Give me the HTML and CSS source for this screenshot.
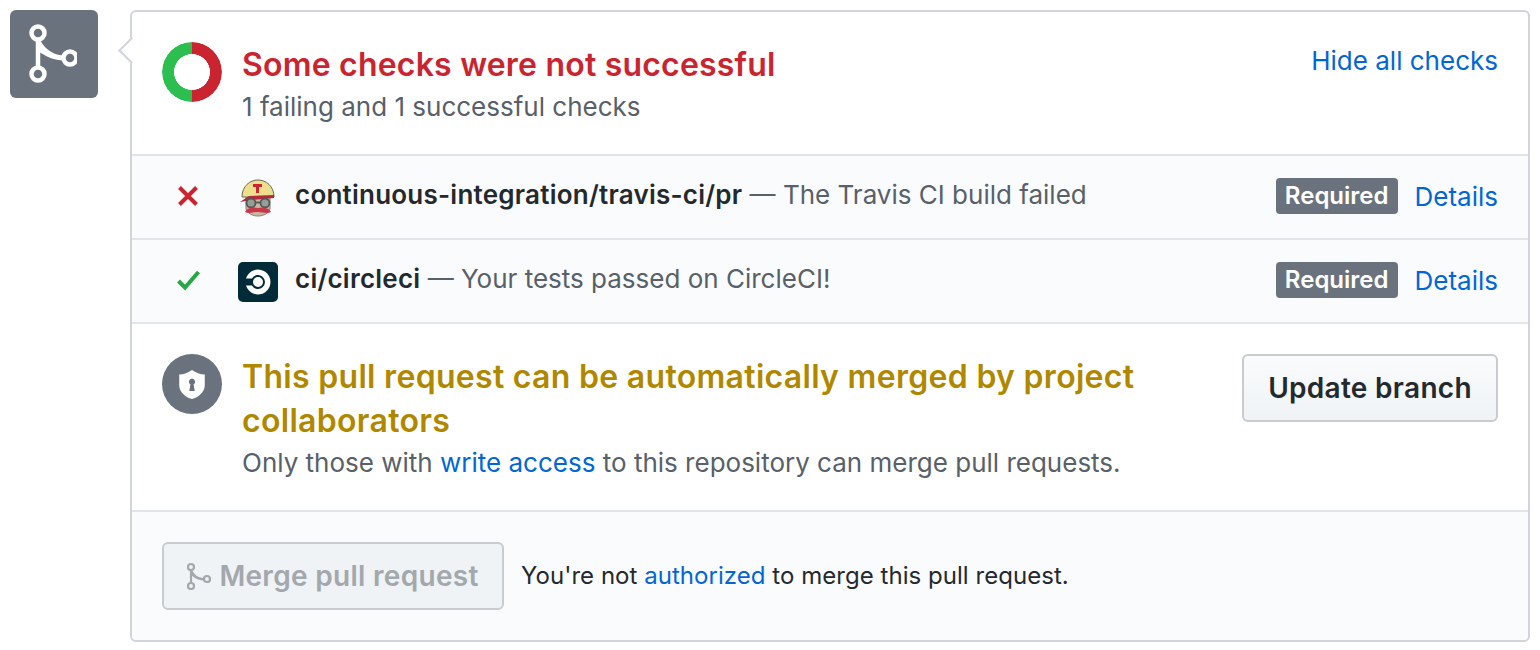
FILE: index.html
```html
<!DOCTYPE html>
<html lang="en">
<head>
<meta charset="utf-8">
<title>Merge status</title>
<link rel="stylesheet" href="styles.css">
</head>
<body>
<main class="page">
  <div class="avatar">
    <svg class="avatar-icon" viewBox="0 0 48 64" width="48" height="64"><g fill="none" stroke="#fff" stroke-width="4.5"><circle cx="9" cy="9" r="6.500"/><circle cx="9" cy="50" r="6.500"/><circle cx="41" cy="34" r="6.500"/><path d="M9 15v29"/></g><path d="M10 14C14 22 21 31 35 31.500V36.500C25 36.500 18 33 9 27Z" fill="#fff"/></svg>
  </div>
  <section class="card">
    <span class="caret"></span>
    <header class="section head">
      <div class="donut"></div>
      <div class="head-text">
        <h2 class="title fail">Some checks were not successful</h2>
        <p class="sub">1 failing and 1 successful checks</p>
      </div>
      <a class="link hide">Hide all checks</a>
    </header>
    <div class="row">
      <svg class="status" viewBox="0 0 24 24" width="24" height="24"><path d="M3.500 3.500l17 17M20.500 3.500l-17 17" stroke="#cb2431" stroke-width="4" fill="none"/></svg>
      <span class="logo">
        <svg viewBox="0 0 40 40" width="40" height="40">
          <path d="M8 19h24v12c-2 5-7 7-12 7s-10-2-12-7z" fill="#c9b6a2" stroke="#8a7f74" stroke-width="1"/>
          <path d="M4 19C4 8 12 2 20 2S36 8 36 19z" fill="#eedf8c" stroke="#6b6a55" stroke-width="1"/>
          <path d="M15 6h9v3h-3v6h-3V9h-3z" fill="#cb2431"/>
          <path d="M2 24l9-6 25-1v3l-23 2z" fill="#b5283c"/>
          <circle cx="13" cy="25" r="4.500" fill="#93a093" stroke="#555" stroke-width="1.800"/>
          <circle cx="27" cy="25" r="4.500" fill="#93a093" stroke="#555" stroke-width="1.800"/>
          <path d="M17 24.500h6" stroke="#555" stroke-width="1.800"/>
          <path d="M7 34c3-5 9-5 13-4 4-1 10-1 13 4-4 2-8 0-13 0s-9 2-13 0z" fill="#c8374a"/>
        </svg>
      </span>
      <p class="row-text"><strong>continuous-integration/travis-ci/pr</strong> — The Travis CI build failed</p>
      <span class="badge">Required</span>
      <a class="link details">Details</a>
    </div>
    <div class="row">
      <svg class="status" viewBox="0 0 24 24" width="24" height="24"><path d="M2.500 13l6.500 6.500L22.500 4" stroke="#28a745" stroke-width="4" fill="none"/></svg>
      <span class="logo">
        <svg viewBox="0 0 40 40" width="40" height="40">
          <rect width="40" height="40" rx="5" fill="#022b3a"/>
          <circle cx="20" cy="20" r="5" fill="#fff"/>
          <path d="M8 16.500A12.500 12.500 0 1 1 8 23.500h5.940a7 7 0 1 0 0-7z" fill="#fff"/>
        </svg>
      </span>
      <p class="row-text"><strong>ci/circleci</strong> — Your tests passed on CircleCI!</p>
      <span class="badge">Required</span>
      <a class="link details">Details</a>
    </div>
    <div class="section merge-info">
      <div class="shield">
        <svg viewBox="0 0 30 34" width="28" height="31"><path fill-rule="evenodd" d="M15 1c4 3 9 5 14 5v12c0 7-7 13-14 15C8 31 1 25 1 18V6c5 0 10-2 14-5zM15 10.500a3.500 3.500 0 0 0-1.700 6.500L12 24h6l-1.300-7A3.500 3.500 0 0 0 15 10.500z" fill="#fff"/></svg>
      </div>
      <div class="head-text">
        <h2 class="title warn">This pull request can be automatically merged by project collaborators</h2>
        <p class="sub">Only those with <a class="link">write access</a> to this repository can merge pull requests.</p>
      </div>
      <button class="btn update">Update branch</button>
    </div>
    <footer class="foot">
      <button class="btn merge">
        <svg viewBox="0 0 24 28" width="24" height="28"><g fill="none" stroke="#a3a8ac" stroke-width="2.200"><circle cx="4" cy="5" r="3"/><circle cx="4" cy="24" r="3"/><circle cx="20" cy="17" r="3"/><path d="M4 8v13"/></g><path d="M4.500 7C7 12 10 16 17.500 16v2.500C11 18.500 8 16 4 13Z" fill="#a3a8ac"/></svg>
        Merge pull request
      </button>
      <p class="foot-text">You're not <a class="link">authorized</a> to merge this pull request.</p>
    </footer>
  </section>
</main>
</body>
</html>
```

FILE: styles.css
```css
* { box-sizing: border-box; }
html, body { margin: 0; background: #fff; }
body { font-family: Inter, "Liberation Sans", sans-serif; color: #24292e; overflow: hidden; }
p, h2 { margin: 0; }
.page { display: flex; align-items: flex-start; gap: 32px; padding: 10px; width: 1540px; height: 650px; }
.avatar { flex: none; width: 88px; height: 88px; border-radius: 6px; background: #6a737d; display: flex; align-items: center; justify-content: center; }
.avatar-icon { margin-top: 4px; margin-left: -3px; }
.card { position: relative; width: 1400px; height: 632px; flex: none; border: 2px solid #d1d5da; border-radius: 6px; background: #fff; display: flex; flex-direction: column; }
.caret { position: absolute; left: -10.500px; top: 28.500px; width: 19px; height: 19px; background: #fff; border-left: 2px solid #d1d5da; border-bottom: 2px solid #d1d5da; transform: rotate(45deg); }
.section { display: flex; align-items: flex-start; padding: 30px 30px 0; position: relative; }
.head { height: 144px; border-bottom: 2px solid #e1e4e8; }
.donut { flex: none; width: 60px; height: 60px; border-radius: 50%; background: conic-gradient(#cb2431 0 50%, #2cbe4e 50% 100%); margin-right: 20px; -webkit-mask: radial-gradient(circle, transparent 17.700px, #000 18.200px); mask: radial-gradient(circle, transparent 17.700px, #000 18.200px); }
.head-text { flex: 1; min-width: 0; }
.title { font-size: 32px; line-height: 44px; font-weight: 600; margin-top: 1px; }
.fail { color: #cb2431; letter-spacing: .2px; }
.warn { color: #b08800; width: 950px; letter-spacing: .3px; }
.sub { font-size: 26px; line-height: 40px; color: #586069; }
.link { color: #0366d6; }
.hide { font-size: 26px; line-height: 36px; margin-top: 1px; }
.row { height: 84px; display: flex; align-items: center; padding: 0 30px 2px 44px; background: #fafbfc; border-bottom: 2px solid #e1e4e8; }
.status { flex: none; margin-right: 38px; }
.logo { flex: none; width: 40px; height: 40px; margin-top: 4px; margin-right: 17px; display: flex; }
.row-text { flex: 1; font-size: 26px; line-height: 40px; color: #586069; margin-bottom: 2px; }
.row-text strong { color: #24292e; font-weight: 600; letter-spacing: .23px; }
.badge { background: #6a737d; color: #fff; font-size: 24px; font-weight: 600; line-height: 36px; border-radius: 4px; padding: 0 9px; margin-right: 17px; }
.details { font-size: 26px; }
.merge-info { height: 188px; border-bottom: 2px solid #e1e4e8; }
.shield { flex: none; width: 60px; height: 60px; border-radius: 50%; background: #6a737d; margin-right: 20px; display: flex; align-items: center; justify-content: center; }
.btn { font-family: inherit; font-weight: 600; font-size: 28px; letter-spacing: .3px; border-radius: 6px; border: 2px solid #c8cbcf; height: 68px; }
.update { flex: none; width: 256px; background: linear-gradient(#fafbfc, #eff3f6); color: #24292e; }
.foot { flex: 1; display: flex; align-items: center; padding: 0 30px; background: #fafbfc; border-radius: 0 0 5px 5px; }
.merge { width: 342px; background: #eff3f6; color: #a3a8ac; display: flex; align-items: center; justify-content: center; gap: 8px; padding: 0; }
.foot-text { margin-left: 17px; margin-bottom: 2px; font-size: 24px; letter-spacing: .04px; color: #24292e; }
```
